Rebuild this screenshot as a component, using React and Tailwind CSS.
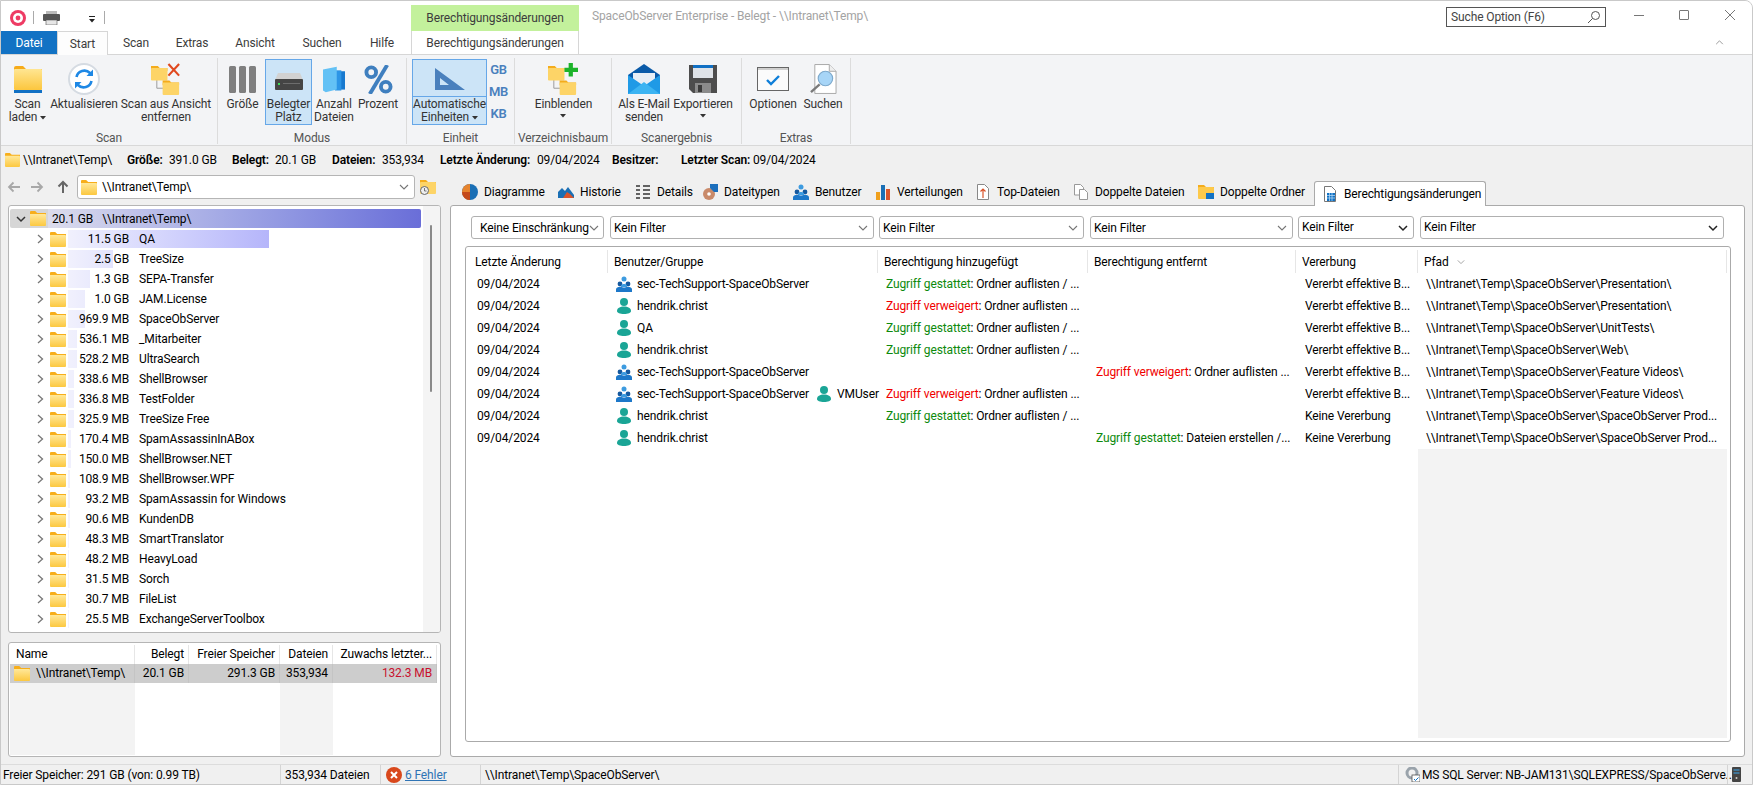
import React, { useId } from "react";

const Folder = ({ className = "w-[16px] h-[15px]" }) => {
  const id = useId();
  return (
    <svg viewBox="0 0 16 15" className={`${className} shrink-0`} preserveAspectRatio="none">
      <defs>
        <linearGradient id={id} x1="0" y1="0" x2="0" y2="1">
          <stop offset="0" stopColor="#ffe89a" />
          <stop offset="1" stopColor="#fcc840" />
        </linearGradient>
      </defs>
      <path d="M0 1.2C0 .5.5 0 1.2 0h4l2 2H16v3H0z" fill="#f7ae1b" />
      <path d="M0 3h15a1 1 0 0 1 1 1v10a1 1 0 0 1-1 1H1a1 1 0 0 1-1-1z" fill={`url(#${id})`} />
    </svg>
  );
};

const ChevronRight = () => (
  <svg viewBox="0 0 10 10" className="w-[10px] h-[10px] shrink-0">
    <path d="M3 1l4.5 4L3 9" fill="none" stroke="#777" strokeWidth="1.3" />
  </svg>
);
const ChevronDown = ({ color = "#777", w = 1.1, className = "w-[10px] h-[10px]" }) => (
  <svg viewBox="0 0 10 10" className={`${className} shrink-0`}>
    <path d="M1 3l4 4 4-4" fill="none" stroke={color} strokeWidth={w} />
  </svg>
);
const Caret = () => (
  <svg viewBox="0 0 6 4" className="w-[6px] h-[4px] inline-block">
    <path d="M0 0h6L3 3.5z" fill="#333" />
  </svg>
);

const TreeFolders = ({ mark }) => (
  <svg viewBox="0 0 32 34" className="w-[31px] h-[33px]">
    <path d="M6 14v12h9" fill="none" stroke="#9a9a9a" strokeWidth="1" />
    <path d="M0 3h7l2 2h8v3H0z" fill="#f4ac1c" />
    <rect x="0" y="5" width="17" height="13" rx="1" fill="#fdd467" />
    <path d="M12 18h7l2 2h8v3H12z" fill="#f4ac1c" />
    <rect x="12" y="20" width="17" height="13" rx="1" fill="#fdd467" />
    {mark === "x" ? (
      <path d="M18 1l11 12M29 1L18 13" stroke="#e0491f" strokeWidth="2.2" />
    ) : (
      <path d="M23.5 0v14M17 7h14" stroke="#1cb32a" strokeWidth="4.4" />
    )}
  </svg>
);

const BigFolder = () => (
  <svg viewBox="0 0 28 27" className="w-[28px] h-[27px]">
    <defs>
      <linearGradient id="bf" x1="0" y1="0" x2="0" y2="1">
        <stop offset="0" stopColor="#ffe692" />
        <stop offset="1" stopColor="#fcc63e" />
      </linearGradient>
    </defs>
    <path d="M0 2a2 2 0 0 1 2-2h7l3 3h16v4H0z" fill="#f6ab19" />
    <rect y="3" width="28" height="21" rx="1" fill="url(#bf)" />
    <rect y="24" width="28" height="3" fill="#1170c4" />
  </svg>
);

const Refresh = () => (
  <svg viewBox="0 0 32 32" className="w-[32px] h-[32px]">
    <circle cx="16" cy="16" r="15" fill="#fff" stroke="#d5dbe2" strokeWidth="2" />
    <path d="M8.5 14a8 8 0 0 1 13.5-4l2 2" fill="none" stroke="#1e88e5" strokeWidth="2.6" />
    <path d="M25 6.5v6.5h-6.5z" fill="#1e88e5" />
    <path d="M23.5 18a8 8 0 0 1-13.5 4l-2-2" fill="none" stroke="#1e88e5" strokeWidth="2.6" />
    <path d="M7 25.5V19h6.5z" fill="#1e88e5" />
  </svg>
);

const Bars3 = () => (
  <svg viewBox="0 0 27 27" className="w-[27px] h-[27px]">
    <rect x="0" width="7" height="27" rx="1.5" fill="#7f7f7f" />
    <rect x="10" width="7" height="27" rx="1.5" fill="#7f7f7f" />
    <rect x="20" width="7" height="27" rx="1.5" fill="#7f7f7f" />
  </svg>
);

const Disk = () => (
  <svg viewBox="0 0 28 18" className="w-[28px] h-[18px] mt-[6px]">
    <path d="M3 0h22l3 7H0z" fill="#d2d2d2" />
    <rect y="6" width="28" height="11" rx="1" fill="#454545" />
    <rect x="3" y="10" width="2" height="2" fill="#3ddc5a" />
    <rect x="8" y="10" width="17" height="1" fill="#6d6d6d" />
  </svg>
);

const Pages = () => (
  <svg viewBox="0 0 24 28" className="w-[22px] h-[27px]">
    <rect x="18" y="5" width="6" height="20" fill="#1779cf" />
    <rect x="13" y="4" width="7" height="22" fill="#2c95e6" />
    <path d="M0 3l15-3v25L3 28 0 26z" fill="#63c1f5" />
  </svg>
);

const Percent = () => (
  <svg viewBox="0 0 30 30" className="w-[29px] h-[29px]">
    <circle cx="7.5" cy="7.5" r="5" fill="none" stroke="#3f7fbf" strokeWidth="4" />
    <circle cx="22.5" cy="22.5" r="5" fill="none" stroke="#3f7fbf" strokeWidth="4" />
    <path d="M24 0L6 30" stroke="#3f7fbf" strokeWidth="4" />
  </svg>
);

const Ruler = () => (
  <svg viewBox="0 0 30 22" className="w-[30px] h-[22px]">
    <path fillRule="evenodd" d="M0 0l30 22H0zM5 10v7h9z" fill="#4a80bd" />
  </svg>
);

const Mail = () => (
  <svg viewBox="0 0 32 30" className="w-[32px] h-[30px]">
    <path d="M0 11L16 0l16 11v4H0z" fill="#0a5aa8" />
    <path d="M5 9h22v10H5z" fill="#e8eef5" />
    <path d="M0 11l16 11 16-11v19H0z" fill="#1f9ae6" />
    <path d="M0 30l16-12 16 12z" fill="#3cb4f2" />
  </svg>
);

const Floppy = () => (
  <svg viewBox="0 0 28 28" className="w-[28px] h-[28px]">
    <path d="M0 0h28v28H4l-4-4z" fill="#4d4d4d" />
    <rect x="4" width="20" height="13" fill="#dfe3e8" />
    <rect x="4" width="20" height="3" fill="#1170c4" />
    <rect x="6" y="18" width="16" height="10" fill="#8b8b8b" />
    <rect x="9" y="20" width="4" height="7" fill="#3c3c3c" />
  </svg>
);

const Options = () => (
  <svg viewBox="0 0 32 24" className="w-[32px] h-[24px]">
    <rect x=".5" y=".5" width="31" height="23" fill="#fbfbfb" stroke="#666" />
    <rect x="1" y="1" width="30" height="2" fill="#cfcfcf" />
    <path d="M10 13l4 4 8-8" fill="none" stroke="#0f7fd9" strokeWidth="2.4" />
  </svg>
);

const DocSearch = () => (
  <svg viewBox="0 0 28 31" className="w-[27px] h-[30px]">
    <path d="M5 .5h15l7 7v23H5z" fill="#fff" stroke="#a8a8a8" />
    <path d="M20 .5v7h7" fill="#eee" stroke="#a8a8a8" />
    <circle cx="16" cy="15" r="7.5" fill="#a7d5f7" stroke="#7da9cc" strokeWidth="1.2" />
    <path d="M10 21L1 29" stroke="#7a7a7a" strokeWidth="2.4" />
  </svg>
);

const RItem = ({ w, icon, l1, l2, caret, active }) => (
  <div className={`${w} h-[66px] shrink-0 flex flex-col items-center ${active ? "bg-[#cce4f7] border border-[#66a7e8] pt-[4px]" : "pt-[5px]"}`}>
    <div className="h-[30px] flex items-center justify-center">{icon}</div>
    <div className="mt-[4px] leading-[13px] text-center whitespace-nowrap text-[#333]">
      <div>{l1}</div>
      {l2 && (
        <div>
          {l2}
          {caret === "inline" && <span className="ml-[3px] align-middle"><Caret /></span>}
        </div>
      )}
      {!l2 && caret === "below" && <div className="flex justify-center pt-[3px]"><Caret /></div>}
    </div>
  </div>
);

const RGroup = ({ w, label, children }) => (
  <div className={`${w} h-[86px] mt-[3px] shrink-0 border-r border-[#dcdcdc] flex flex-col`}>
    <div className="flex h-[71px] pt-[1px] flex-1">{children}</div>
    <div className="h-[15px] leading-[18px] text-center text-[#555] whitespace-nowrap">{label}</div>
  </div>
);

const TitleBar = () => (
  <div className="h-[30px] flex shrink-0 bg-white">
    <div className="w-[410px] flex items-center pt-[3px] shrink-0">
      <svg viewBox="0 0 16 16" className="w-[16px] h-[16px] ml-[9px]">
        <circle cx="8" cy="8" r="8" fill="#ee3b64" />
        <circle cx="8" cy="8" r="5" fill="#fff" />
        <circle cx="8" cy="8" r="2.4" fill="#ee3b64" />
      </svg>
      <div className="w-px h-[13px] bg-[#aaa] ml-[7px]" />
      <svg viewBox="0 0 17 14" className="w-[17px] h-[14px] ml-[9px]">
        <rect x="3" y="0" width="11" height="4" fill="#bbb" />
        <rect x="0" y="3" width="17" height="7" rx="1" fill="#555" />
        <rect x="3" y="9" width="11" height="5" fill="#e6e6e6" stroke="#555" strokeWidth=".6" />
      </svg>
      <svg viewBox="0 0 8 7" className="w-[8px] h-[7px] ml-[28px] mt-[3px]">
        <path d="M1 .5h6" stroke="#222" />
        <path d="M1 3h6L4 6.5z" fill="#222" />
      </svg>
      <div className="w-px h-[13px] bg-[#aaa] ml-[8px]" />
    </div>
    <div className="w-[168px] shrink-0 mt-[4px] h-[26px] bg-[#c3f19c] flex items-center justify-center text-[#3c3c3c]">Berechtigungsänderungen</div>
    <div className="ml-[13px] w-[500px] mt-[7px] leading-[17px] text-[#a3a3a3] whitespace-nowrap">SpaceObServer Enterprise - Belegt - \\Intranet\Temp\</div>
    <div className="ml-[354px] mt-[6px] w-[160px] h-[20px] border border-[#555] flex items-center justify-between pl-[4px] pr-[4px] text-[#444] shrink-0">
      <span>Suche Option (F6)</span>
      <svg viewBox="0 0 14 14" className="w-[14px] h-[14px]">
        <circle cx="8.5" cy="5.5" r="4" fill="none" stroke="#555" />
        <path d="M5.5 8.5L1 13" stroke="#555" />
      </svg>
    </div>
    <svg viewBox="0 0 10 1" className="w-[10px] h-[1px] ml-[28px] mt-[14px]"><rect width="10" height="1" fill="#777" /></svg>
    <div className="w-[10px] h-[10px] ml-[35px] mt-[9px] border border-[#777] rounded-[1px]" />
    <svg viewBox="0 0 10 10" className="w-[10px] h-[10px] ml-[36px] mt-[9px]"><path d="M0 0l10 10M10 0L0 10" stroke="#777" /></svg>
  </div>
);

const tabsTop = [
  ["w-[51px]", "Start"],
  ["w-[56px]", "Scan"],
  ["w-[56px]", "Extras"],
  ["w-[70px]", "Ansicht"],
  ["w-[64px]", "Suchen"],
  ["w-[56px]", "Hilfe"],
];

const RibbonTabs = () => (
  <div className="h-[24px] flex shrink-0 bg-white border-b border-[#d6d6d6] relative">
    <div className="w-[56px] h-[23px] bg-[#1272c4] text-white flex items-center justify-center shrink-0">Datei</div>
    {tabsTop.map(([w, t], i) => (
      <div key={t} className={`${w} shrink-0 flex items-center justify-center text-[#3c3c3c] ${i === 0 ? "h-[24px] bg-[#fdfdfd] border border-b-0 border-[#d6d6d6]" : "h-[23px]"}`}>{t}</div>
    ))}
    <div className="w-[168px] ml-px h-[23px] border-x border-[#d6d6d6] flex items-center justify-center text-[#3c3c3c] shrink-0">Berechtigungsänderungen</div>
    <svg viewBox="0 0 10 6" className="w-[9px] h-[5px] ml-[1136px] mt-[9px]"><path d="M1 5l4-4 4 4" fill="none" stroke="#888" /></svg>
  </div>
);

const Ribbon = () => (
  <div className="h-[91px] flex shrink-0 bg-[#f3f4f6] border-b border-[#d8d8d8]">
    <RGroup w="w-[217px]" label="Scan">
      <RItem w="w-[53px]" icon={<BigFolder />} l1="Scan" l2="laden" caret="inline" />
      <RItem w="w-[60px]" icon={<Refresh />} l1="Aktualisieren" />
      <RItem w="w-[104px]" icon={<TreeFolders mark="x" />} l1="Scan aus Ansicht" l2="entfernen" />
    </RGroup>
    <RGroup w="w-[189px]" label="Modus">
      <div className="w-[2px]" />
      <RItem w="w-[45px]" icon={<Bars3 />} l1="Größe" />
      <RItem w="w-[47px]" icon={<Disk />} l1="Belegter" l2="Platz" active />
      <RItem w="w-[44px]" icon={<Pages />} l1="Anzahl" l2="Dateien" />
      <RItem w="w-[44px]" icon={<Percent />} l1="Prozent" />
    </RGroup>
    <RGroup w="w-[108px]" label="Einheit">
      <div className="w-[5px]" />
      <div className="w-[75px] h-[66px] bg-[#cce4f7] border border-[#66a7e8] flex flex-col shrink-0">
        <div className="h-[37px] border-b border-[#66a7e8] flex items-center justify-center pt-[3px]"><Ruler /></div>
        <div className="leading-[13px] text-center text-[#333] whitespace-nowrap pt-[1px]">
          <div>Automatische</div>
          <div>Einheiten <span className="align-middle"><Caret /></span></div>
        </div>
      </div>
      <div className="w-[23px] text-[#4a80bd] font-semibold text-[13px] flex flex-col items-center leading-[22px] tracking-[-0.3px]">
        <span>GB</span><span>MB</span><span>KB</span>
      </div>
    </RGroup>
    <RGroup w="w-[97px]" label="Verzeichnisbaum">
      <RItem w="w-[97px]" icon={<TreeFolders mark="plus" />} l1="Einblenden" caret="below" />
    </RGroup>
    <RGroup w="w-[130px]" label="Scanergebnis">
      <RItem w="w-[64px]" icon={<Mail />} l1="Als E-Mail" l2="senden" />
      <RItem w="w-[54px]" icon={<Floppy />} l1="Exportieren" caret="below" />
    </RGroup>
    <RGroup w="w-[109px]" label="Extras">
      <RItem w="w-[62px]" icon={<Options />} l1="Optionen" />
      <RItem w="w-[38px]" icon={<DocSearch />} l1="Suchen" />
    </RGroup>
  </div>
);

const InfoBar = () => (
  <div className="h-[24px] flex items-center shrink-0 bg-[#f0f0f0] text-black pt-[4px] whitespace-nowrap">
    <div className="w-[4px] shrink-0" />
    <Folder className="w-[15px] h-[14px]" />
    <div className="w-[107px] pl-[3px] shrink-0">\\Intranet\Temp\</div>
    <b className="w-[42px] font-semibold shrink-0">Größe:</b>
    <div className="w-[63px] shrink-0">391.0 GB</div>
    <b className="w-[43px] font-semibold shrink-0">Belegt:</b>
    <div className="w-[57px] shrink-0">20.1 GB</div>
    <b className="w-[50px] font-semibold shrink-0">Dateien:</b>
    <div className="w-[58px] shrink-0">353,934</div>
    <b className="w-[97px] font-semibold shrink-0">Letzte Änderung:</b>
    <div className="w-[75px] shrink-0">09/04/2024</div>
    <b className="w-[69px] font-semibold shrink-0">Besitzer:</b>
    <b className="w-[72px] font-semibold shrink-0">Letzter Scan:</b>
    <div className="shrink-0">09/04/2024</div>
  </div>
);

const tree = [
  ["11.5 GB", "QA", 201],
  ["2.5 GB", "TreeSize", 45],
  ["1.3 GB", "SEPA-Transfer", 22],
  ["1.0 GB", "JAM.License", 17],
  ["969.9 MB", "SpaceObServer", 17],
  ["536.1 MB", "_Mitarbeiter", 9],
  ["528.2 MB", "UltraSearch", 9],
  ["338.6 MB", "ShellBrowser", 6],
  ["336.8 MB", "TestFolder", 6],
  ["325.9 MB", "TreeSize Free", 6],
  ["170.4 MB", "SpamAssassinInABox", 3],
  ["150.0 MB", "ShellBrowser.NET", 3],
  ["108.9 MB", "ShellBrowser.WPF", 2],
  ["93.2 MB", "SpamAssassin for Windows", 2],
  ["90.6 MB", "KundenDB", 2],
  ["48.3 MB", "SmartTranslator", 1],
  ["48.2 MB", "HeavyLoad", 1],
  ["31.5 MB", "Sorch", 1],
  ["30.7 MB", "FileList", 1],
  ["25.5 MB", "ExchangeServerToolbox", 1],
];

const Tree = () => (
  <div className="h-[428px] mx-[8px] w-[433px] border border-[#b5b5b5] rounded-[3px] bg-white flex overflow-hidden shrink-0">
    <div className="w-[414px] pt-[3px] shrink-0 overflow-hidden">
      <div className="h-[19px] mb-px ml-px w-[411px] flex items-center bg-[#d6d6d6] rounded-[2px]">
        <div className="w-[6px]" />
        <ChevronDown color="#333" w={1.5} />
        <div className="w-[4px]" />
        <Folder />
        <div className="w-[2px]" />
        <div className="flex-1 h-full flex items-center bg-gradient-to-r from-[#dcdcec] to-[#6a6ed8] pl-[4px] rounded-r-[2px] text-black whitespace-nowrap">
          <span>20.1 GB</span>
          <span className="ml-[9px]">\\Intranet\Temp\</span>
        </div>
      </div>
      {tree.map(([s, n, b]) => (
        <div key={n} className="h-[20px] flex items-center ml-px">
          <div className="w-[25px]" />
          <ChevronRight />
          <div className="w-[5px]" />
          <Folder />
          <div className="w-[2px]" />
          <div className="relative flex-1 h-[18px] flex items-center whitespace-nowrap text-black">
            <div className="absolute left-0 top-0 h-full overflow-hidden" style={{ width: b }}>
              <div className="w-[201px] h-full bg-gradient-to-r from-[#f1f1fd] to-[#b5b5fa]" />
            </div>
            <span className="relative w-[61px] text-right">{s}</span>
            <span className="relative ml-[10px]">{n}</span>
          </div>
        </div>
      ))}
    </div>
    <div className="flex-1 bg-[#f4f4f4] pt-[19px] pl-[7px]">
      <div className="w-[2px] h-[167px] bg-[#8a8a8a] rounded-full" />
    </div>
  </div>
);

const cols = [
  ["w-[125px]", "Name", "\\\\Intranet\\Temp\\", "text-left", true],
  ["w-[54px]", "Belegt", "20.1 GB", "text-right", false],
  ["w-[91px]", "Freier Speicher", "291.3 GB", "text-right", false],
  ["w-[53px]", "Dateien", "353,934", "text-right", true],
  ["w-[104px]", "Zuwachs letzter...", "132.3 MB", "text-right", false],
];

const Drives = () => (
  <div className="h-[115px] mx-[8px] w-[433px] border border-[#b5b5b5] rounded-[3px] bg-white flex flex-col pl-px pt-[2px] overflow-hidden shrink-0 mt-[9px]">
    <div className="flex h-[19px] text-black">
      {cols.map(([w, h, , a], i) => (
        <div key={h} className={`${w} ${a} shrink-0 border-r border-[#e6e6e6] pr-[4px] whitespace-nowrap leading-[18px] ${i === 0 ? "pl-[6px]" : ""}`}>{h}</div>
      ))}
    </div>
    <div className="flex flex-1">
      {cols.map(([w, h, v, a, alt], i) => (
        <div key={h} className={`${w} shrink-0 ${alt ? "bg-[#f3f3f3]" : ""} h-[91px]`}>
          <div className={`h-[19px] bg-[#cdcdcd] ${a} pr-[4px] leading-[19px] flex items-center ${a === "text-right" ? "justify-end" : ""} ${i === 4 ? "text-[#c8102e]" : "text-black"} whitespace-nowrap border-r border-[#c4c4c4]`}>
            {i === 0 && <span className="pl-[4px] pr-[6px]"><Folder /></span>}
            {v}
          </div>
        </div>
      ))}
    </div>
  </div>
);

const LeftPane = () => (
  <div className="w-[450px] shrink-0 flex flex-col">
    <div className="h-[35px] flex items-center shrink-0 pb-[1px]">
      <svg viewBox="0 0 14 12" className="w-[14px] h-[12px] ml-[7px]"><path d="M13 6H2M6.5 1.5L2 6l4.500 4.500" fill="none" stroke="#a8a8a8" strokeWidth="1.8" /></svg>
      <svg viewBox="0 0 14 12" className="w-[14px] h-[12px] ml-[9px]"><path d="M1 6h11M7.500 1.500L12 6l-4.500 4.500" fill="none" stroke="#a8a8a8" strokeWidth="1.800" /></svg>
      <svg viewBox="0 0 12 14" className="w-[12px] h-[14px] ml-[13px]"><path d="M6 13V2M1.500 6.500L6 2l4.500 4.500" fill="none" stroke="#666" strokeWidth="2" /></svg>
      <div className="w-[338px] h-[24px] ml-[8px] border border-[#b5b5b5] rounded-[3px] bg-white flex items-center pl-[3px] pr-[5px] shrink-0 text-black">
        <Folder />
        <span className="ml-[5px] flex-1">\\Intranet\Temp\</span>
        <ChevronDown />
      </div>
      <svg viewBox="0 0 17 16" className="w-[17px] h-[16px] ml-[5px]">
        <path d="M0 1h6l2 2h8v3H0z" fill="#f4ac1c" />
        <rect y="3" width="16" height="12" rx="1" fill="#fdd467" />
        <circle cx="4.500" cy="11.500" r="4" fill="#eee" stroke="#666" />
        <path d="M4.500 9v3h2" fill="none" stroke="#555" strokeWidth=".8" />
      </svg>
    </div>
    <Tree />
    <Drives />
  </div>
);

const I = ({ children }) => (
  <svg viewBox="0 0 16 16" className="w-[16px] h-[16px] shrink-0">{children}</svg>
);

const icoPie = (
  <I>
    <circle cx="8" cy="8" r="8" fill="#1a6fb5" />
    <path d="M8 0a8 8 0 0 0-8 8 8 8 0 0 0 8 8z" fill="#e7842e" />
    <path d="M8 8L0 8a8 8 0 0 0 8 8z" fill="#c44a1c" />
  </I>
);
const icoArea = (
  <I>
    <path d="M0 14V8l4-4 3 3 3-4 6 8v3z" fill="#1a6fb5" />
    <path d="M5 14l4-6 3 2 4 4z" fill="#d9542b" />
  </I>
);
const icoList = (
  <I>
    <path d="M1 2h4M1 6h4M1 10h4M1 14h4M8 2h7M8 6h7M8 10h7M8 14h7" stroke="#333" strokeWidth="1.300" />
  </I>
);
const icoTypes = (
  <I>
    <circle cx="7" cy="10" r="6" fill="#c98a6a" />
    <circle cx="7" cy="10" r="1.800" fill="#fff" />
    <path d="M8 0h8v8h-4L8 4z" fill="#1c6fbc" />
  </I>
);
const Persons = () => (
  <I>
    <circle cx="8" cy="3" r="2.500" fill="#3d9be0" />
    <circle cx="4" cy="8" r="2.400" fill="#15599f" />
    <circle cx="12" cy="8" r="2.400" fill="#15599f" />
    <path d="M0 16v-2.500C0 11.500 2 11 4 11s3 .6 4 .6 2-.6 4-.6 4 .5 4 2.500V16z" fill="#1d78c9" />
    <path d="M5 9.500C5.500 7.500 10.500 7.500 11 9.500V11H5z" fill="#3d9be0" />
  </I>
);
const Person = () => (
  <I>
    <circle cx="8" cy="4" r="4" fill="#1aa596" />
    <path d="M1 13c0-3 3-4.500 7-4.500s7 1.500 7 4.500c0 2-3 3-7 3s-7-1-7-3z" fill="#1aa596" />
  </I>
);
const icoBars = (
  <I>
    <rect x="1" y="8" width="4" height="8" fill="#f0a01d" />
    <rect x="6" y="1" width="4" height="15" fill="#1a6fb5" />
    <rect x="11" y="5" width="4" height="11" fill="#d9542b" />
  </I>
);
const icoTop = (
  <I>
    <path d="M2.500.5h7l4 4v11h-11z" fill="#fff" stroke="#888" />
    <path d="M8 14V5M5.500 7.500L8 5l2.500 2.500" fill="none" stroke="#d9542b" strokeWidth="1.200" />
  </I>
);
const icoDup = (
  <I>
    <path d="M1.500.5h6l3 3V11h-9z" fill="#fff" stroke="#999" />
    <path d="M6.500 5.500h5l3 3v7h-8z" fill="#fff" stroke="#999" />
  </I>
);
const icoDupFolder = (
  <I>
    <path d="M0 1h6l2 2h8v2H0z" fill="#f4ac1c" />
    <rect y="3" width="16" height="12" rx="1" fill="#fdc94a" />
    <rect x="8" y="9" width="8" height="6" fill="#1272c4" />
  </I>
);
const icoPerm = (
  <I>
    <path d="M2.500.5h7l4 4v11h-11z" fill="#fff" stroke="#777" />
    <rect x="5" y="7" width="8" height="8" fill="#1272c4" />
    <path d="M5 9.500h8M5 12h8M7.500 7v8M10 7v8" stroke="#bfe0fa" strokeWidth=".700" />
  </I>
);

const rTabs = [
  ["w-[96px]", icoPie, "Diagramme"],
  ["w-[77px]", icoArea, "Historie"],
  ["w-[67px]", icoList, "Details"],
  ["w-[91px]", icoTypes, "Dateitypen"],
  ["w-[82px]", <Persons />, "Benutzer"],
  ["w-[100px]", icoBars, "Verteilungen"],
  ["w-[98px]", icoTop, "Top-Dateien"],
  ["w-[125px]", icoDup, "Doppelte Dateien"],
  ["w-[116px]", icoDupFolder, "Doppelte Ordner"],
];

const filters = [
  ["w-[133px]", "ml-[6px]", "Keine Einschränkung", "pl-[8px]", false],
  ["w-[264px]", "ml-[6px]", "Kein Filter", "pl-[3px]", false],
  ["w-[205px]", "ml-[5px]", "Kein Filter", "pl-[3px]", false],
  ["w-[203px]", "ml-[6px]", "Kein Filter", "pl-[3px]", false],
  ["w-[116px]", "ml-[5px]", "Kein Filter", "pl-[3px]", true],
  ["w-[304px]", "ml-[6px]", "Kein Filter", "pl-[3px]", true],
];

const tableCols = ["w-[142px]", "w-[270px]", "w-[210px]", "w-[208px]", "w-[122px]", "w-[309px]"];
const heads = ["Letzte Änderung", "Benutzer/Gruppe", "Berechtigung hinzugefügt", "Berechtigung entfernt", "Vererbung", "Pfad"];

const G = "Zugriff gestattet";
const R = "Zugriff verweigert";
const rows = [
  ["g", "sec-TechSupport-SpaceObServer", null, [G, ": Ordner auflisten / ..."], null, "Vererbt effektive B...", "\\\\Intranet\\Temp\\SpaceObServer\\Presentation\\"],
  ["p", "hendrik.christ", null, [R, ": Ordner auflisten ..."], null, "Vererbt effektive B...", "\\\\Intranet\\Temp\\SpaceObServer\\Presentation\\"],
  ["p", "QA", null, [G, ": Ordner auflisten / ..."], null, "Vererbt effektive B...", "\\\\Intranet\\Temp\\SpaceObServer\\UnitTests\\"],
  ["p", "hendrik.christ", null, [G, ": Ordner auflisten / ..."], null, "Vererbt effektive B...", "\\\\Intranet\\Temp\\SpaceObServer\\Web\\"],
  ["g", "sec-TechSupport-SpaceObServer", null, null, [R, ": Ordner auflisten ..."], "Vererbt effektive B...", "\\\\Intranet\\Temp\\SpaceObServer\\Feature Videos\\"],
  ["g", "sec-TechSupport-SpaceObServer", "VMUser", [R, ": Ordner auflisten ..."], null, "Vererbt effektive B...", "\\\\Intranet\\Temp\\SpaceObServer\\Feature Videos\\"],
  ["p", "hendrik.christ", null, [G, ": Ordner auflisten / ..."], null, "Keine Vererbung", "\\\\Intranet\\Temp\\SpaceObServer\\SpaceObServer Prod..."],
  ["p", "hendrik.christ", null, null, [G, ": Dateien erstellen /..."], "Keine Vererbung", "\\\\Intranet\\Temp\\SpaceObServer\\SpaceObServer Prod..."],
];

const Perm = ({ v }) =>
  v ? (
    <div className="pl-[8px] whitespace-nowrap">
      <span className={v[0] === G ? "text-[#0d8a0d]" : "text-[#f00000]"}>{v[0]}</span>
      <span className="text-black">{v[1]}</span>
    </div>
  ) : null;

const RightPane = () => (
  <div className="w-[1295px] shrink-0 flex flex-col">
    <div className="h-[35px] flex items-end shrink-0 pl-[12px] relative z-10">
      {rTabs.map(([w, ic, t]) => (
        <div key={t} className={`${w} h-[25px] pb-[2px] flex items-center gap-[6px] shrink-0 whitespace-nowrap text-black`}>
          {ic}
          <span>{t}</span>
        </div>
      ))}
      <div className="w-[172px] h-[25px] -mb-px bg-white border border-b-0 border-[#aaa] rounded-t-[3px] flex items-center gap-[6px] pl-[7px] shrink-0 whitespace-nowrap text-black">
        {icoPerm}
        <span>Berechtigungsänderungen</span>
      </div>
    </div>
    <div className="h-[552px] border border-[#aaa] rounded-[3px] bg-white pt-[10px] pl-[14px] flex flex-col shrink-0">
      <div className="flex h-[23px] shrink-0">
        {filters.map(([w, m, t, p, dark], i) => (
          <div key={i} className={`${w} ${m} ${p} h-[23px] shrink-0 border border-[#b0b0b0] rounded-[3px] bg-white flex items-center justify-between pr-[5px] whitespace-nowrap text-black`}>
            <span className={dark ? "-mt-[1px]" : ""}>{t}</span>
            <ChevronDown color={dark ? "#222" : "#777"} w={dark ? 1.5 : 1.1} />
          </div>
        ))}
      </div>
      <div className="mt-[7px] w-[1266px] h-[496px] border border-[#aaa] rounded-[3px] flex flex-col shrink-0 pt-[3px] overflow-hidden">
        <div className="flex h-[23px] shrink-0">
          {heads.map((h, i) => (
            <div key={h} className={`${tableCols[i]} shrink-0 border-r border-[#e6e6e6] flex items-center text-black whitespace-nowrap ${i === 0 ? "pl-[9px]" : "pl-[6px]"}`}>
              {h}
              {i === 5 && <span className="ml-[8px]"><ChevronDown color="#999" className="w-[8px] h-[8px]" /></span>}
            </div>
          ))}
        </div>
        {rows.map((r, i) => (
          <div key={i} className="flex h-[22px] items-center shrink-0 text-black">
            <div className={`${tableCols[0]} pl-[11px] shrink-0`}>09/04/2024</div>
            <div className={`${tableCols[1]} shrink-0 flex items-center pl-[8px] whitespace-nowrap`}>
              {r[0] === "g" ? <Persons /> : <Person />}
              <span className="ml-[5px]">{r[1]}</span>
              {r[2] && (
                <>
                  <span className="ml-[7px]"><Person /></span>
                  <span className="ml-[5px]">{r[2]}</span>
                </>
              )}
            </div>
            <div className={`${tableCols[2]} shrink-0`}><Perm v={r[3]} /></div>
            <div className={`${tableCols[3]} shrink-0`}><Perm v={r[4]} /></div>
            <div className={`${tableCols[4]} shrink-0 pl-[9px] whitespace-nowrap`}>{r[5]}</div>
            <div className={`${tableCols[5]} shrink-0 pl-[8px] whitespace-nowrap`}>{r[6]}</div>
          </div>
        ))}
        <div className="flex-1 flex min-h-0">
          <div className="w-[952px] shrink-0" />
          <div className="w-[309px] bg-[#f3f3f3] mb-[3px]" />
        </div>
      </div>
    </div>
  </div>
);

const StatusBar = () => (
  <div className="h-[20px] mt-[7px] flex items-center shrink-0 bg-[#f0f0f0] border-t border-[#dcdcdc] text-black whitespace-nowrap">
    <div className="w-[279px] pl-[2px] shrink-0">Freier Speicher: 291 GB (von: 0.99 TB)</div>
    <div className="w-[100px] h-full border-l border-[#d4d4d4] pl-[4px] flex items-center shrink-0">353,934 Dateien</div>
    <div className="w-[100px] h-full border-l border-[#d4d4d4] pl-[5px] flex items-center shrink-0">
      <svg viewBox="0 0 16 16" className="w-[16px] h-[16px]">
        <circle cx="8" cy="8" r="8" fill="#d9481c" />
        <path d="M5 5l6 6M11 5l-6 6" stroke="#fff" strokeWidth="2" />
      </svg>
      <span className="ml-[3px] underline text-[#2f74b5]">6 Fehler</span>
    </div>
    <div className="w-[918px] h-full border-l border-[#d4d4d4] pl-[4px] flex items-center shrink-0">\\Intranet\Temp\SpaceObServer\</div>
    <div className="w-[329px] h-full border-l border-[#d4d4d4] pl-[6px] flex items-center shrink-0">
      <svg viewBox="0 0 15 15" className="w-[15px] h-[15px] shrink-0">
        <circle cx="7" cy="6" r="5" fill="none" stroke="#9aa3ab" strokeWidth="3" />
        <rect x="7" y="8" width="8" height="7" fill="#fff" stroke="#555" strokeWidth=".8" />
        <path d="M9 12l1.500 1.500 3-3" fill="none" stroke="#1272c4" />
      </svg>
      <span className="ml-[2px]">MS SQL Server: NB-JAM131\SQLEXPRESS/SpaceObServe...</span>
    </div>
    <div className="flex-1 h-full border-l border-[#d4d4d4] pl-[4px] flex items-center">
      <svg viewBox="0 0 9 15" className="w-[9px] h-[15px]">
        <rect width="9" height="15" rx="1" fill="#444" />
        <path d="M1.500 3h6M1.500 6h6" stroke="#3ba7f0" />
        <circle cx="4.500" cy="11" r="1" fill="#ccc" />
      </svg>
    </div>
  </div>
);

export default function App() {
  return (
    <div className="w-[1753px] h-[785px] overflow-hidden bg-white">
      <div className="w-full h-full flex flex-col border border-[#c9c9c9] rounded-tr-[8px] overflow-hidden bg-[#f0f0f0] text-[12px] leading-[16px] tracking-[-0.12px] [font-family:Roboto,'Noto_Sans',sans-serif]">
        <TitleBar />
        <RibbonTabs />
        <Ribbon />
        <InfoBar />
        <div className="flex shrink-0 h-[587px] -ml-px">
          <LeftPane />
          <RightPane />
        </div>
        <StatusBar />
      </div>
    </div>
  );
}
